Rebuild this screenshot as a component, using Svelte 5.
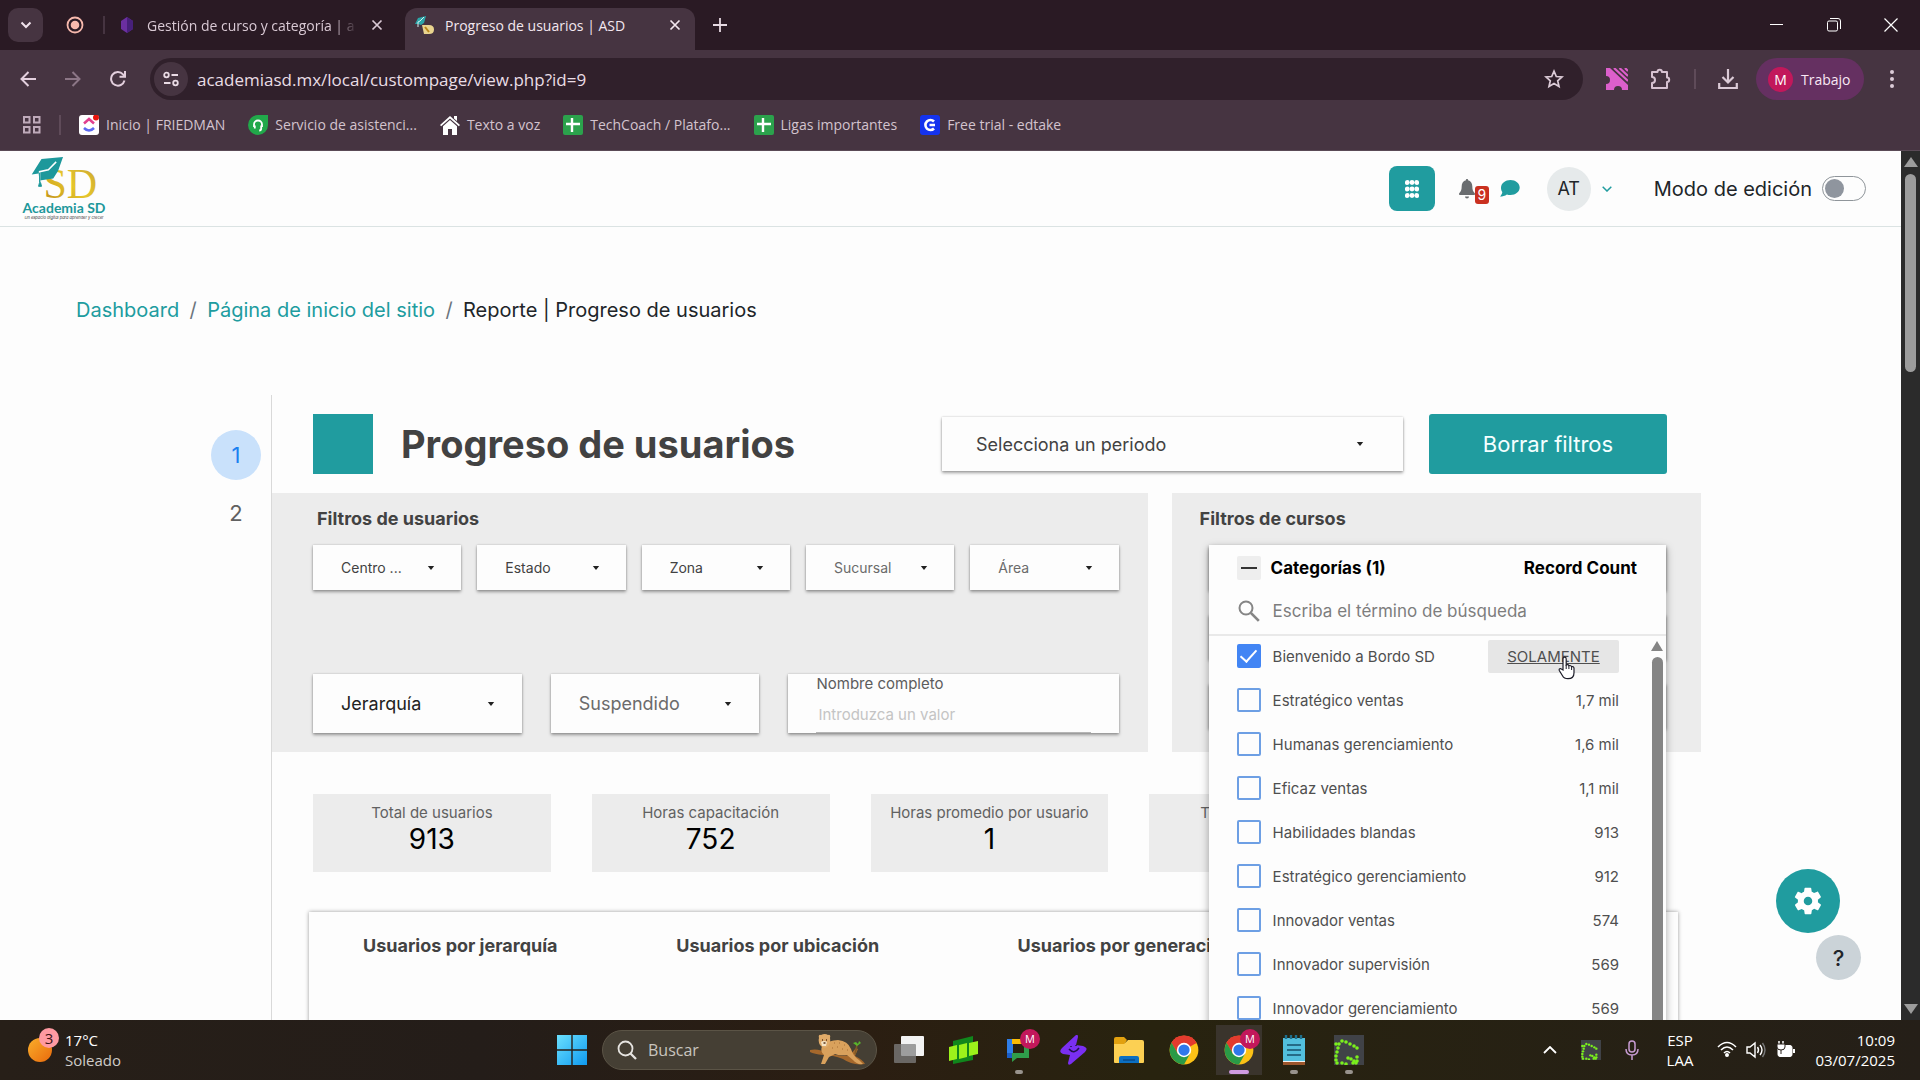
<script lang="ts">
	const userFilters = [
		{ label: "Centro ...", soft: false },
		{ label: "Estado", soft: false },
		{ label: "Zona", soft: false },
		{ label: "Sucursal", soft: true },
		{ label: "Área", soft: true },
	];

	const stats = [
		{ label: "Total de usuarios", value: "913" },
		{ label: "Horas capacitación", value: "752" },
		{ label: "Horas promedio por usuario", value: "1" },
		{ label: "Total de categorías", value: "" },
	];

	let categories = $state([
		{ name: "Bienvenido a Bordo SD", count: "", checked: true },
		{ name: "Estratégico ventas", count: "1,7 mil", checked: false },
		{ name: "Humanas gerenciamiento", count: "1,6 mil", checked: false },
		{ name: "Eficaz ventas", count: "1,1 mil", checked: false },
		{ name: "Habilidades blandas", count: "913", checked: false },
		{ name: "Estratégico gerenciamiento", count: "912", checked: false },
		{ name: "Innovador ventas", count: "574", checked: false },
		{ name: "Innovador supervisión", count: "569", checked: false },
		{ name: "Innovador gerenciamiento", count: "569", checked: false },
	]);
	let selected = $derived(categories.filter((c) => c.checked).length);

	// dots of the green "C" app icon
	const dots = [
		[8, 6], [12, 7], [16, 9], [20, 11], [23, 13], [5, 9], [2, 9], [4, 13], [3, 17], [2, 21],
		[2, 25], [3, 28], [8, 28], [12, 29], [22, 28], [19, 28], [23, 26], [20, 26], [17, 24], [14, 23], [23, 22],
	];
</script>

{#snippet dropdown(label: string, kind: string)}
	<label class="dropdown {kind}">
		<select aria-label={label}>
			<option>{label}</option>
		</select>
		<svg class="caret" viewBox="0 0 8 5" width="8" height="4"><path d="M0 0h8L4 5z" fill="#222" /></svg>
	</label>
{/snippet}

{#snippet cross(size: number)}
	<svg width={size} height={size} viewBox="0 0 12 12"><path d="M1.5 1.5l9 9M10.5 1.5l-9 9" stroke="currentColor" stroke-width="1.7" fill="none" /></svg>
{/snippet}

{#snippet chrome()}
	<svg width="30" height="30" viewBox="0 0 48 48">
		<circle cx="24" cy="24" r="23" fill="#fbc116" />
		<path d="M24 24L4 12.600a23 23 0 0 1 40 0z" fill="#e33b2e" />
		<path d="M24 13h20a23 23 0 0 0-40-.400l10 17z" fill="#e33b2e" />
		<path d="M4.100 12.500A23 23 0 0 0 24 47l9.700-17H14.300z" fill="#2a9a47" />
		<circle cx="24" cy="24" r="11.500" fill="#fff" />
		<circle cx="24" cy="24" r="9" fill="#2f78ea" />
	</svg>
{/snippet}

{#snippet greenDots(size: number)}
	<svg width={size} height={size} viewBox="0 0 30 30">
		<rect width="30" height="30" fill="#404247" />
		{#each dots as [x, y]}
			<circle cx={x} cy={y} r="1.800" fill="#7bf01c" />
		{/each}
	</svg>
{/snippet}

{#snippet sheet()}
	<svg width="20" height="20" viewBox="0 0 20 20">
		<rect width="20" height="20" rx="2" fill="#2ba24c" />
		<path d="M9 3v14M3 9h14" stroke="#fff" stroke-width="2.400" />
	</svg>
{/snippet}

{#snippet cap(w: number, h: number)}
	<svg class="cap" width={w} height={h} viewBox="0 0 66 45">
		<defs>
			<linearGradient id="gold" x1="0" y1="1" x2="1" y2="0">
				<stop offset="0" stop-color="#b98516" /><stop offset=".5" stop-color="#e6c62b" /><stop offset="1" stop-color="#c9a535" />
			</linearGradient>
		</defs>
		<text x="12" y="42" font-family="Liberation Serif, serif" font-size="43" fill="url(#gold)">SD</text>
		<path d="M10 2L32 0 27 14 22 22 8 24 7 17 0 18z" fill="#1d989b" />
		<path d="M25 5l-8 8-9 2v10" fill="none" stroke="#fff" stroke-width="1.500" />
		<path d="M8 16v10l-1 4h3l-1-4" fill="#1d989b" stroke="#1d989b" />
	</svg>
{/snippet}

<div class="screen">
	<header class="browser">
		<div class="tabstrip">
			<button class="tab-search" aria-label="Buscar pestañas">
				<svg width="12" height="8" viewBox="0 0 12 8"><path d="M1.500 1.500L6 6l4.500-4.500" stroke="#f0e2ec" stroke-width="2" fill="none" /></svg>
			</button>
			<div class="pinned">
				<svg width="18" height="18" viewBox="0 0 18 18"><circle cx="9" cy="9" r="7.500" fill="none" stroke="#f7b9ad" stroke-width="1.800" /><circle cx="9" cy="9" r="4.300" fill="#f7b9ad" /></svg>
			</div>
			<div class="tab">
				<svg width="14" height="16" viewBox="0 0 14 16"><path d="M7 0l6 4v8l-6 4-6-4V4z" fill="#6b2fa0" /><path d="M7 0l6 4v8l-6 4z" fill="#47207a" /></svg>
				<span class="tab-title fade">Gestión de curso y categoría | a</span>
				<button class="bare" aria-label="Cerrar">{@render cross(12)}</button>
			</div>
			<div class="tab active">
				<svg width="20" height="18" viewBox="0 0 20 18">
					<path d="M7 9h7q5 0 5 4.500T14 18H9z" fill="#e9d48e" /><path d="M10 11l4 5" stroke="#b98516" stroke-width="2" />
					<path d="M3 2L11 0 9 7 6 9 3 8 0 8z" fill="#2ba5a8" /><path d="M9 1L5 5 3 6v5" fill="none" stroke="#d7f1f1" />
				</svg>
				<span class="tab-title">Progreso de usuarios | ASD</span>
				<button class="bare" aria-label="Cerrar">{@render cross(12)}</button>
			</div>
			<button class="bare new-tab" aria-label="Nueva pestaña">
				<svg width="14" height="14" viewBox="0 0 14 14"><path d="M7 0v14M0 7h14" stroke="currentColor" stroke-width="1.800" /></svg>
			</button>
			<div class="window-buttons">
				<button class="bare" aria-label="Minimizar"><svg width="14" height="14" viewBox="0 0 14 14"><path d="M0 6.500h13" stroke="#fff" /></svg></button>
				<button class="bare" aria-label="Restaurar"><svg width="14" height="14" viewBox="0 0 14 14" fill="none" stroke="#fff"><rect x=".5" y="3" width="10" height="10" rx="1.500" /><path d="M3 .500h8a2.500 2.500 0 0 1 2.500 2.500v8" /></svg></button>
				<button class="bare" aria-label="Cerrar ventana"><svg width="14" height="14" viewBox="0 0 14 14"><path d="M.5.500l13 13M13.500.500l-13 13" stroke="#fff" stroke-width="1.200" /></svg></button>
			</div>
		</div>

		<div class="toolbar">
			<div class="nav">
				<button class="bare" aria-label="Atrás"><svg width="16" height="16" viewBox="0 0 16 16" fill="none" stroke="#e3cfdd" stroke-width="2"><path d="M16 8H2M8.500 1L1.500 8l7 7" /></svg></button>
				<button class="bare" aria-label="Adelante"><svg width="16" height="16" viewBox="0 0 16 16" fill="none" stroke="#8c7686" stroke-width="2"><path d="M0 8h14M7.500 1l7 7-7 7" /></svg></button>
				<button class="bare" aria-label="Recargar"><svg width="16" height="16" viewBox="0 0 16 16" fill="none" stroke="#e3cfdd" stroke-width="2"><path d="M14.500 9.500A6.800 6.800 0 1 1 13 3.300L15 5.500M15 0v5.800H9.500" /></svg></button>
			</div>
			<div class="omnibox">
				<button class="site-info" aria-label="Información del sitio">
					<svg width="16" height="16" viewBox="0 0 16 16" fill="none" stroke="#eadbe5" stroke-width="1.800"><circle cx="3.500" cy="4" r="2.300" /><path d="M8.500 4H15M1 12h6.500" /><circle cx="12.500" cy="12" r="2.300" /></svg>
				</button>
				<input aria-label="Dirección" value="academiasd.mx/local/custompage/view.php?id=9" />
				<button class="bare" aria-label="Favorito"><svg width="20" height="20" viewBox="0 0 20 20" fill="none" stroke="#dccbd7" stroke-width="1.700"><path d="M10 2.200l2.300 5.300 5.700.500-4.300 3.800 1.300 5.600-5-3-5 3 1.300-5.600L2 8l5.700-.500z" /></svg></button>
			</div>
			<div class="extensions">
				<svg width="22" height="22" viewBox="0 0 22 22"><path d="M0 0h4l18 17v5h-6a4 4 0 0 0-8 0H0v-6a4 4 0 0 0 0-8z" fill="#dc5fcb" /><path d="M8 0l14 13M13.500 0L22 8M19 0l3 3" stroke="#dc5fcb" stroke-width="2.200" /></svg>
				<svg width="22" height="22" viewBox="0 0 22 22" fill="none" stroke="#d7c2d1" stroke-width="2"><path d="M2 4h5.500a2.200 2.200 0 0 1 4.400 0H17v5.500a2.200 2.200 0 0 1 0 4.400V20H2v-5a3 3 0 0 0 0-6z" stroke-linejoin="round" /></svg>
				<span class="bar"></span>
				<svg width="20" height="20" viewBox="0 0 20 20" fill="none" stroke="#dccbd7" stroke-width="2.200"><path d="M10 0v13M4.500 8l5.500 5.500L15.500 8M1.200 14v5h17.600v-5" /></svg>
			</div>
			<button class="profile"><span class="initial">M</span>Trabajo</button>
			<button class="bare more" aria-label="Más"><svg width="4" height="18" viewBox="0 0 4 18" fill="#dccbd7"><circle cx="2" cy="2" r="2" /><circle cx="2" cy="9" r="2" /><circle cx="2" cy="16" r="2" /></svg></button>
		</div>

		<nav class="bookmarks">
			<svg width="18" height="18" viewBox="0 0 18 18" fill="none" stroke="#bfaaba" stroke-width="2"><rect x="1" y="1" width="5.500" height="5.500" /><rect x="11" y="1" width="5.500" height="5.500" /><rect x="1" y="11" width="5.500" height="5.500" /><rect x="11" y="11" width="5.500" height="5.500" /></svg>
			<span class="bar"></span>
			<a href="#inicio">
				<svg width="20" height="20" viewBox="0 0 20 20"><rect width="20" height="20" rx="3" fill="#fff" /><path d="M5 8.500l5-4.500 5 4.500" fill="none" stroke="#e0408f" stroke-width="2.500" /><path d="M5 13q5 5 10 0" fill="none" stroke="#5b68f0" stroke-width="2.500" /><circle cx="17" cy="2.500" r="3" fill="#e8150e" /></svg>
				Inicio | FRIEDMAN
			</a>
			<a href="#servicio">
				<svg width="20" height="20" viewBox="0 0 20 20"><path d="M10 0h10v10a10 10 0 1 1-10-10z" fill="#21a84a" /><path d="M6 12V9.500a4 4 0 0 1 8 0V12M6.800 10.500v3M13.200 10.500v3q0 2-2 2" fill="none" stroke="#fff" stroke-width="1.800" /></svg>
				Servicio de asistenci...
			</a>
			<a href="#voz">
				<svg width="20" height="20" viewBox="0 0 20 20" fill="#fff"><path d="M10 1l10 9-1.200 1.300L10 3.500l-8.800 7.800L0 10zM14 1h3v5l-3-2.500zM10 5l7 6.200V20h-5v-6H8v6H3v-8.800z" /></svg>
				Texto a voz
			</a>
			<a href="#tech">{@render sheet()}TechCoach / Platafo...</a>
			<a href="#ligas">{@render sheet()}Ligas importantes</a>
			<a href="#edtake">
				<svg width="20" height="20" viewBox="0 0 20 20"><rect width="20" height="20" rx="3" fill="#1433ee" /><path d="M14 6.500a5 5 0 1 0 0 7M9.500 10H15" fill="none" stroke="#fff" stroke-width="2.600" /></svg>
				Free trial - edtake
			</a>
		</nav>
	</header>

	<div class="viewport">
		<div class="page">
			<div class="site-nav">
				<a class="brand" href="#home">
					{@render cap(66, 44)}
					<strong>Academia SD</strong>
					<small>Un espacio digital para aprender y crecer</small>
				</a>
				<div class="site-actions">
					<button class="apps" aria-label="Aplicaciones">
						<svg width="14" height="18" viewBox="0 0 14 18" fill="#fff">
							{#each [2.5, 9, 15.5] as y}
								{#each [2.3, 7, 11.7] as x}
									<circle cx={x} cy={y} r="2.400" />
								{/each}
							{/each}
						</svg>
					</button>
					<button class="bare bell" aria-label="Notificaciones">
						<svg width="18" height="20" viewBox="0 0 16 20" fill="#6a6d70"><path d="M8 0a1 1 0 0 1 1 1.300c3 .700 4.300 3 4.300 6 0 4 1 5.500 2.500 7 .400.700 0 1.700-.800 1.700H1c-.800 0-1.200-1-.800-1.700C1.700 12.800 2.700 11.300 2.700 7.300c0-3 1.300-5.300 4.300-6A1 1 0 0 1 8 0zM6 17.500h4a2 2 0 0 1-4 0z" /></svg>
						<span class="badge">9</span>
					</button>
					<button class="bare chat" aria-label="Mensajes"><svg width="20" height="17" viewBox="0 0 20 17"><path d="M10.500 0c5 0 9.200 3.200 9.200 7.500S15.500 15 10.500 15c-1.300 0-2.500-.200-3.600-.600C5 15.800 2.500 16.500 0 16.500c1.300-1.200 2.200-3 2.300-4.500C1.200 10.800 1 9 1 7.500 1 3.200 5.500 0 10.500 0z" fill="#209c9f" /></svg></button>
					<button class="user">
						<span class="avatar">AT</span>
						<svg width="10" height="6" viewBox="0 0 10 6"><path d="M.700.700L5 5 9.300.700" fill="none" stroke="#209c9f" stroke-width="1.500" /></svg>
					</button>
					<label class="edit-mode">Modo de edición <input type="checkbox" class="switch" /></label>
				</div>
			</div>

			<nav class="breadcrumb">
				<a href="#dashboard">Dashboard</a><span class="slash">/</span><a href="#inicio-sitio">Página de inicio del sitio</a><span class="slash">/</span><span>Reporte | Progreso de usuarios</span>
			</nav>

			<main class="report">
				<div class="pager">
					<button class="page-no current">1</button>
					<button class="page-no">2</button>
				</div>

				<div class="canvas">
					<div class="heading">
						<span class="swatch"></span>
						<h1>Progreso de usuarios</h1>
						{@render dropdown("Selecciona un periodo", "period")}
						<button class="clear">Borrar filtros</button>
					</div>

					<div class="filters">
						<section class="panel">
							<h2>Filtros de usuarios</h2>
							<div class="row five">
								{#each userFilters as f}
									{@render dropdown(f.label, f.soft ? "soft" : "")}
								{/each}
							</div>
							<div class="row three">
								{@render dropdown("Jerarquía", "tall dark")}
								{@render dropdown("Suspendido", "tall soft")}
								<label class="name-box">
									Nombre completo
									<input placeholder="Introduzca un valor" />
								</label>
							</div>
						</section>

						<section class="panel courses">
							<h2>Filtros de cursos</h2>
							<div class="slots"><div></div><div></div><div></div></div>

							<div class="popup">
								<div class="popup-head">
									<button class="collapse" aria-label="Deseleccionar todo"></button>
									<strong>Categorías ({selected})</strong>
									<strong class="count-head">Record Count</strong>
								</div>
								<div class="popup-search">
									<svg width="22" height="22" viewBox="0 0 22 22" fill="none" stroke="#858585" stroke-width="2"><circle cx="8" cy="8" r="6.500" /><path d="M12.800 12.800l8 8" stroke-width="2.600" /></svg>
									<input placeholder="Escriba el término de búsqueda" aria-label="Buscar categoría" />
								</div>
								<div class="popup-body">
									<ul>
										{#each categories as c, i}
											<li>
												<label><input type="checkbox" bind:checked={c.checked} />{c.name}</label>
												{#if i === 0}
													<button class="only">SOLAMENTE</button>
												{:else}
													<span>{c.count}</span>
												{/if}
											</li>
										{/each}
									</ul>
									<div class="popup-scroll">
										<svg width="12" height="10" viewBox="0 0 12 10"><path d="M6 0l6 10H0z" fill="#858585" /></svg>
										<div class="thumb"></div>
									</div>
								</div>
								<svg class="pointer" width="18" height="24" viewBox="0 0 18 24"><path d="M5 14V3q0-1.800 1.600-1.800T8.200 3v6q2-1 2.700.700 2-.700 2.700 1 2-.500 2.400 1.500v4.500q0 6-6 6-4 0-5.500-3L1.300 14.500q-.600-2 1.200-2z" fill="#fff" stroke="#1c1c28" stroke-width="1.200" /><path d="M8.200 9v4M10.900 10v3M13.600 11v3" stroke="#1c1c28" /></svg>
							</div>
						</section>
					</div>

					<div class="stats">
						{#each stats as s}
							<div class="stat">
								<span>{s.label}</span>
								<b>{s.value}</b>
							</div>
						{/each}
					</div>

					<div class="charts">
						<h3>Usuarios por jerarquía</h3>
						<h3>Usuarios por ubicación</h3>
						<h3>Usuarios por generación</h3>
					</div>
				</div>
			</main>

			<button class="fab settings" aria-label="Ajustes">
				<svg width="32" height="32" viewBox="0 0 24 24"><path fill="#fff" d="M19.400 13c0-.300.100-.700.100-1s0-.700-.100-1l2.100-1.700c.200-.200.200-.400.100-.600l-2-3.500c-.100-.200-.400-.300-.600-.200l-2.500 1c-.500-.400-1.100-.700-1.700-1l-.400-2.600c0-.200-.200-.400-.500-.400h-4c-.200 0-.500.200-.500.400l-.400 2.700c-.600.200-1.200.600-1.700 1l-2.500-1c-.200-.100-.500 0-.600.200l-2 3.500c-.100.200-.1.500.1.600L4.500 11c0 .300-.1.700-.1 1s0 .700.1 1l-2.100 1.700c-.200.200-.2.400-.1.600l2 3.500c.1.200.4.300.6.200l2.500-1c.5.400 1.100.700 1.700 1l.4 2.600c0 .2.2.4.500.4h4c.2 0 .5-.2.500-.4l.4-2.700c.6-.2 1.200-.6 1.700-1l2.500 1c.2.100.5 0 .6-.2l2-3.500c.1-.2.1-.5-.1-.600zM12 15.200a3.200 3.200 0 1 1 0-6.400 3.200 3.200 0 0 1 0 6.400z" /></svg>
			</button>
			<button class="fab help">?</button>
		</div>

		<div class="scrollbar">
			<svg width="14" height="10" viewBox="0 0 14 10"><path d="M7 0l7 10H0z" fill="#9c9c9c" /></svg>
			<div class="thumb"></div>
			<svg width="14" height="10" viewBox="0 0 14 10"><path d="M7 10l7-10H0z" fill="#9c9c9c" /></svg>
		</div>
	</div>

	<footer class="taskbar">
		<div class="weather">
			<div class="sun"><span>3</span></div>
			<div>17°C<br /><em>Soleado</em></div>
		</div>
		<div class="apps-row">
			<svg class="start" width="30" height="30" viewBox="0 0 30 30">
				<defs><linearGradient id="win" x1="0" y1="0" x2="1" y2="1"><stop offset="0" stop-color="#6be0fd" /><stop offset="1" stop-color="#0f9af0" /></linearGradient></defs>
				<path d="M0 0h14.300v14.300H0zM15.700 0H30v14.300H15.700zM0 15.700h14.300V30H0zM15.700 15.700H30V30H15.700z" fill="url(#win)" />
			</svg>
			<label class="task-search">
				<svg width="20" height="20" viewBox="0 0 20 20" fill="none" stroke="#e6e4e0" stroke-width="1.800"><circle cx="8.500" cy="8.500" r="7" /><path d="M13.500 13.500l5.500 5.500" stroke-width="2.300" /></svg>
				<input placeholder="Buscar" />
				<svg width="56" height="32" viewBox="0 0 56 32">
					<path d="M0 16q8-2 18 3 12 4 22 2l6-7 2 1-3 7q8 4 10 8-12 2-22-5-10-4-20-4Q4 20 0 18z" fill="#a5682c" />
					<path d="M12 12q7-6 16-6 10 1 13 9 2 7 8 11l4 4q-6 1-10-4l-6-5q-8 1-12-1l-6 3-4 7h-4l3-9q-4-3-2-9z" fill="#d9a15c" />
					<path d="M9 4q-1-4 2-3 4-2 7 0 3-1 2 3 1 6-3 9-4 2-7-2-2-3-1-7z" fill="#e0ab69" />
					<path d="M11 8q3-2 6 0l-1 4h-4z" fill="#f4e3c5" />
					<path d="M12 6h1M16 6h1M13.500 9h2" stroke="#59351a" stroke-width="1.500" />
					<path d="M24 9h1M29 9h1M34 11h1M27 13h1M32 15h1M37 16h1M22 14h1" stroke="#a86f35" stroke-width="1.200" />
					<path d="M45 20l2-9" stroke="#7e5a24" stroke-width="1.500" /><path d="M47 12l-4-3 3-1 2 2 1-3 2 2z" fill="#59b52c" />
				</svg>
			</label>
			<div class="app"><svg width="30" height="30" viewBox="0 0 30 30"><rect x="7" y="1" width="23" height="20" rx="1" fill="#f3f3f3" /><rect x="0" y="9" width="22" height="19" rx="1" fill="#808080" fill-opacity=".75" /></svg></div>
			<div class="app"><svg width="30" height="30" viewBox="0 0 30 30"><path d="M4 6L24 1v24L4 29z" fill="#10861c" /><path d="M0 12l8-2v14l-8 2zM10 10l8-2v14l-8 2zM20 8l9-2v13l-9 2z" fill="#9cf21b" /></svg></div>
			<div class="app">
				<svg width="30" height="30" viewBox="0 0 30 30"><path d="M3 4h6v15H3z" fill="#2f7ee8" /><path d="M8 4h12v5H8z" fill="#fbbc05" /><path d="M3 18h5v5H3z" fill="#1a5ec7" /><path d="M8 18h12V9h5v14H13l-5 4z" fill="#2f9d4b" /></svg>
				<span class="mbadge">M</span><i></i>
			</div>
			<div class="app"><svg width="30" height="30" viewBox="0 0 30 30"><path d="M17 0q2-1 2 2l-2 8 7 1q6 2 2 6L12 29q-3 2-3-1l2-8-7-1q-5-2-1-6z" fill="#7a2ff2" /><path d="M10 14q5 6 10-1M12 11v1M17 10v1" fill="none" stroke="#22114a" stroke-width="1.500" /></svg></div>
			<div class="app"><svg width="30" height="30" viewBox="0 0 30 30"><path d="M0 4q0-2 2-2h8l3 3-3 5H0z" fill="#e2a10f" /><path d="M0 9h10l4-4h14q2 0 2 2v20q0 1-1 1H1q-1 0-1-1z" fill="#fcd053" /><path d="M5 28v-5q0-2 2-2h16q2 0 2 2v5z" fill="#0b6fc2" /><path d="M9 25h12" stroke="#0a4a8a" stroke-width="1.500" /></svg></div>
			<div class="app">{@render chrome()}</div>
			<div class="app open">{@render chrome()}<span class="mbadge">M</span><i class="wide"></i></div>
			<div class="app"><svg width="30" height="30" viewBox="0 0 30 30"><path d="M4 25h22v5H4z" fill="#9c562c" /><path d="M4 25h22v2H4z" fill="#f2f2f2" /><path d="M4 3h22v23H4z" fill="#52bfdd" /><path d="M8 10h14M8 15h14M8 20h14" stroke="#17506b" stroke-width="1.600" /><path d="M7 0v4M12 0v4M17 0v4M22 0v4" stroke="#1e6f8c" stroke-width="2.400" /></svg><i></i></div>
			<div class="app">{@render greenDots(30)}<i></i></div>
		</div>
		<div class="tray">
			<svg width="14" height="8" viewBox="0 0 14 8"><path d="M1 7l6-6 6 6" fill="none" stroke="#fff" stroke-width="1.800" /></svg>
			{@render greenDots(20)}
			<svg width="14" height="20" viewBox="0 0 14 20" fill="none" stroke="#c79bd2" stroke-width="1.500"><rect x="4" y="1" width="6" height="11" rx="3" /><path d="M1 9q0 6 6 6t6-6M7 15v5" /></svg>
			<div class="lang">ESP<br />LAA</div>
			<div class="status">
				<svg width="20" height="16" viewBox="0 0 20 16" fill="none" stroke="#fff" stroke-width="1.600"><path d="M1 6q9-9 18 0M4 9q6-6 12 0M7 12q3-3 6 0" /><circle cx="10" cy="14" r="1.200" fill="#fff" /></svg>
				<svg width="20" height="18" viewBox="0 0 20 18" fill="none" stroke="#fff" stroke-width="1.400"><path d="M1 6h3l5-4v14l-5-4H1zM11.500 6q2 3 0 6M14 4q4 5 0 10" /><path d="M16.500 2q5 7 0 14" stroke="#777" /></svg>
				<svg width="20" height="18" viewBox="0 0 20 18"><rect x="3" y="4.500" width="14" height="11" rx="2" fill="#fff" stroke="#fff" /><path d="M18 8h2v4h-2z" fill="#fff" /><path d="M4 0v3M8 0v3" stroke="#fff" stroke-width="1.500" /><path d="M2 3h8v3q0 3-4 3t-4-3zM6 9v4" fill="#fff" stroke="#28211b" stroke-width="1" /></svg>
			</div>
			<div class="clock">10:09<br />03/07/2025</div>
		</div>
	</footer>
</div>

<style>
	:global(body) {
		margin: 0;
	}
	.screen {
		display: flex;
		flex-direction: column;
		height: 100vh;
		overflow: hidden;
		background: #fdfdfd;
		font-family: "Inter", sans-serif;
		color: #212529;
	}
	.screen * {
		box-sizing: border-box;
	}
	button,
	input,
	select {
		font: inherit;
		color: inherit;
	}
	svg {
		display: block;
		flex: none;
	}
	.bare {
		display: flex;
		align-items: center;
		background: none;
		border: 0;
		padding: 0;
	}

	/* browser chrome */
	.browser {
		flex: none;
		background: #463441;
		color: #e6d9e2;
		font-family: "Open Sans", sans-serif;
		font-size: 14px;
		border-bottom: 1px solid #5a4a56;
	}
	.tabstrip {
		display: flex;
		align-items: center;
		height: 50px;
		padding-left: 8px;
		background: #2a1a24;
	}
	.tab-search {
		display: grid;
		place-items: center;
		width: 35px;
		height: 34px;
		border: 0;
		border-radius: 10px;
		background: #463441;
	}
	.pinned {
		display: flex;
		justify-content: flex-end;
		width: 62px;
		padding-right: 19px;
		border-right: 2px solid #463441;
	}
	.tab {
		display: flex;
		align-items: center;
		width: 300px;
		gap: 13px;
		padding: 0 22px 0 15px;
		color: #d9c9d4;
	}
	.tab.active {
		width: 290px;
		height: 42px;
		align-self: flex-end;
		gap: 10px;
		padding: 0 14px 8px 10px;
		border-radius: 12px 12px 0 0;
		background: #463441;
		color: #f3e7ef;
	}
	.tab-title {
		flex: 1;
		white-space: nowrap;
		overflow: hidden;
	}
	.fade {
		mask-image: linear-gradient(to right, #000 88%, transparent);
	}
	.new-tab {
		margin-left: 18px;
	}
	.window-buttons {
		display: flex;
		gap: 43px;
		margin-left: auto;
		padding-right: 22px;
	}
	.toolbar {
		display: flex;
		align-items: center;
		height: 58px;
	}
	.nav {
		display: flex;
		gap: 29px;
		width: 150px;
		padding-left: 20px;
	}
	.omnibox {
		display: flex;
		flex: 1;
		align-items: center;
		height: 42px;
		gap: 7px;
		padding: 0 19px 0 4px;
		border-radius: 21px;
		background: #30202b;
	}
	.omnibox input {
		flex: 1;
		border: 0;
		background: none;
		font-size: 17px;
		color: #e9dde5;
	}
	.site-info {
		display: grid;
		place-items: center;
		width: 34px;
		height: 34px;
		border: 0;
		border-radius: 50%;
		background: #463441;
	}
	.extensions {
		display: flex;
		align-items: center;
		gap: 22px;
		padding: 0 18px 0 23px;
	}
	.bar {
		width: 2px;
		height: 20px;
		background: #5f4b59;
	}
	.profile {
		display: flex;
		align-items: center;
		gap: 8px;
		height: 42px;
		width: 108px;
		padding: 0 12px;
		border: 0;
		border-radius: 21px;
		background: #653061;
		color: #f9e8f5;
	}
	.initial {
		display: grid;
		place-items: center;
		flex: none;
		width: 25px;
		height: 25px;
		border-radius: 50%;
		background: #c2185b;
		color: #fff;
	}
	.more {
		margin: 0 26px;
	}
	.bookmarks {
		display: flex;
		align-items: center;
		height: 42px;
		padding: 0 0 9px 23px;
	}
	.bookmarks .bar {
		margin: 0 18px;
	}
	.bookmarks a {
		display: flex;
		align-items: center;
		gap: 7px;
		margin-right: 23px;
		color: #d3c3ce;
		text-decoration: none;
		white-space: nowrap;
	}

	/* site */
	.viewport {
		display: flex;
		flex: 1;
		min-height: 0;
	}
	.page {
		position: relative;
		flex: 1;
		min-width: 0;
		overflow: hidden;
	}
	.scrollbar {
		display: flex;
		flex-direction: column;
		align-items: center;
		width: 19px;
		padding: 6px 0;
		background: #2b2b2b;
	}
	.scrollbar .thumb {
		width: 11px;
		height: 198px;
		margin: 7px 0 auto;
		border-radius: 6px;
		background: #9c9c9c;
	}
	.site-nav {
		display: flex;
		justify-content: space-between;
		align-items: center;
		height: 76px;
		padding: 0 35px 0 23px;
		border-bottom: 1px solid #dbe3e3;
	}
	.brand {
		display: flex;
		flex-direction: column;
		align-items: center;
		width: 82px;
		color: #1d989b;
		text-decoration: none;
	}
	.cap {
		overflow: visible;
	}
	.brand strong {
		font: bold 14px/14px "Lato", sans-serif;
		white-space: nowrap;
	}
	.brand small {
		font-size: 4px;
		line-height: 5px;
		font-style: italic;
		color: #333;
		white-space: nowrap;
	}
	.site-actions {
		display: flex;
		align-items: center;
		font-size: 20px;
	}
	.apps {
		display: grid;
		place-items: center;
		width: 46px;
		height: 45px;
		border: 0;
		border-radius: 8px;
		background: #209c9f;
	}
	.bell {
		position: relative;
		margin-left: 23px;
	}
	.badge {
		position: absolute;
		left: 17px;
		top: 7px;
		width: 14px;
		border-radius: 3px;
		background: #ca3120;
		color: #fff;
		font-size: 14px;
		line-height: 18px;
		text-align: center;
	}
	.chat {
		margin-left: 24px;
	}
	.user {
		display: flex;
		align-items: center;
		gap: 11px;
		margin-left: 27px;
		padding: 0;
		border: 0;
		background: none;
	}
	.avatar {
		display: grid;
		place-items: center;
		width: 44px;
		height: 44px;
		border-radius: 50%;
		background: #e6eaeb;
		font-size: 18px;
	}
	.edit-mode {
		display: flex;
		align-items: center;
		gap: 10px;
		margin-left: 42px;
	}
	.switch {
		appearance: none;
		width: 44px;
		height: 25px;
		margin: 0;
		padding: 2px;
		border: 1px solid #8f959a;
		border-radius: 13px;
	}
	.switch::before {
		content: "";
		display: block;
		width: 19px;
		height: 19px;
		border-radius: 50%;
		background: #8f959e;
	}
	.breadcrumb {
		display: flex;
		align-items: center;
		padding: 69px 76px 0;
		font-size: 20px;
		line-height: 28px;
	}
	.breadcrumb a {
		color: #209c9f;
		text-decoration: none;
	}
	.slash {
		width: 28px;
		text-align: center;
		color: #6c757d;
	}

	/* report */
	.report {
		display: flex;
		margin: 71px 200px 0 211px;
	}
	.pager {
		display: flex;
		flex-direction: column;
		gap: 8px;
		width: 60px;
		padding-top: 35px;
	}
	.page-no {
		width: 50px;
		height: 50px;
		border: 0;
		border-radius: 50%;
		background: none;
		color: #616161;
		font-size: 22px;
	}
	.page-no.current {
		background: #c9e1fb;
		color: #1a80f0;
	}
	.canvas {
		flex: 1;
		min-width: 0;
		min-height: 700px;
		border-left: 1px solid #d9d9d9;
	}
	.heading {
		display: flex;
		align-items: center;
		padding: 19px 34px 19px 41px;
	}
	.swatch {
		width: 60px;
		height: 60px;
		background: #209c9f;
	}
	h1 {
		flex: 1;
		margin: 0 0 0 28px;
		font-size: 38px;
		line-height: 46px;
		color: #424242;
		white-space: nowrap;
	}
	.clear {
		width: 238px;
		height: 60px;
		margin-left: 26px;
		border: 0;
		border-radius: 3px;
		background: #209c9f;
		color: #f4ffff;
		font-size: 22px;
	}
	.dropdown {
		display: flex;
		align-items: center;
		height: 45px;
		padding: 0 26px 0 28px;
		background: #fdfdfd;
		box-shadow: 0 2px 3px rgba(0, 0, 0, 0.35), 0 0 2px rgba(0, 0, 0, 0.2);
		font-size: 14px;
		color: #424242;
	}
	.dropdown select {
		flex: 1;
		min-width: 0;
		appearance: none;
		border: 0;
		padding: 0;
		background: none;
	}
	.period {
		width: 461px;
		height: 54px;
		padding: 0 39px 0 34px;
		font-size: 18px;
	}
	.tall {
		height: 59px;
		padding: 0 27px 0 28px;
		font-size: 18px;
	}
	.soft {
		color: #6b6b6b;
	}
	.dark {
		color: #222;
	}
	.filters {
		display: grid;
		grid-template-columns: 875fr 529fr;
		gap: 24px;
	}
	.panel {
		position: relative;
		height: 259px;
		padding: 14px 29px 0 41px;
		background: #ececec;
	}
	.panel.courses {
		padding: 14px 35px 0 37px;
	}
	h2 {
		margin: 0 0 14px 4px;
		font-size: 18px;
		line-height: 24px;
		color: #424242;
	}
	.courses h2 {
		margin-left: -9px;
	}
	.row {
		display: grid;
	}
	.five {
		grid-template-columns: repeat(5, 1fr);
		gap: 16px;
	}
	.three {
		grid-template-columns: 208fr 208fr 329fr;
		gap: 29px;
		margin-top: 84px;
	}
	.name-box {
		display: flex;
		flex-direction: column;
		height: 59px;
		padding: 0 28px;
		background: #fdfdfd;
		box-shadow: 0 2px 3px rgba(0, 0, 0, 0.35), 0 0 2px rgba(0, 0, 0, 0.2);
		font-size: 15px;
		line-height: 20px;
		color: #5c5c5c;
	}
	.name-box input {
		flex: 1;
		min-width: 0;
		padding: 3px 2px 0;
		border: 0;
		border-bottom: 1px solid #b5b5b5;
		background: none;
		font-size: 15px;
	}
	.name-box input::placeholder {
		color: #c4c4c4;
	}
	.slots {
		display: grid;
		gap: 24px;
	}
	.slots div {
		height: 45px;
		background: #fdfdfd;
		box-shadow: 0 2px 3px rgba(0, 0, 0, 0.5);
	}
	.popup {
		position: absolute;
		z-index: 1;
		top: 52px;
		left: 37px;
		right: 35px;
		background: #fdfdfd;
		box-shadow: 0 3px 8px rgba(0, 0, 0, 0.35);
	}
	.popup-head {
		display: flex;
		align-items: center;
		gap: 10px;
		height: 46px;
		padding: 0 29px 0 28px;
		font-size: 17px;
		color: #000;
	}
	.collapse {
		width: 24px;
		height: 24px;
		padding: 0 4px;
		border: 0;
		border-radius: 2px;
		background: #eee;
	}
	.collapse::before {
		content: "";
		display: block;
		height: 2px;
		background: #333;
	}
	.count-head {
		margin-left: auto;
	}
	.popup-search {
		display: flex;
		align-items: center;
		gap: 13px;
		height: 45px;
		padding: 0 29px 3px;
		border-bottom: 2px solid #e9e9e9;
	}
	.popup-search input {
		flex: 1;
		border: 0;
		padding: 0;
		background: none;
		font-size: 17px;
	}
	.popup-search input::placeholder {
		color: #7d7d7d;
	}
	.popup-body {
		display: flex;
		height: 560px;
	}
	ul {
		flex: 1;
		margin: -2px 0 0;
		padding: 0 29px 0 28px;
		list-style: none;
		font-size: 15px;
		color: #4f4f4f;
	}
	li {
		display: flex;
		justify-content: space-between;
		align-items: center;
		height: 44px;
	}
	li label {
		display: flex;
		align-items: center;
		gap: 12px;
	}
	li input {
		appearance: none;
		width: 24px;
		height: 24px;
		margin: 0;
		border: 2px solid #6d9fe4;
		border-radius: 2px;
	}
	li input:checked {
		border-color: #4285f4;
		background: #4285f4;
	}
	li input:checked::before {
		content: "";
		display: block;
		width: 7px;
		height: 14px;
		margin: 0 auto;
		border: solid #fff;
		border-width: 0 2px 2px 0;
		transform: rotate(42deg);
	}
	.only {
		width: 131px;
		height: 33px;
		border: 0;
		border-radius: 2px;
		background: #e6e6e6;
		text-decoration: underline;
	}
	.popup-scroll {
		display: flex;
		flex-direction: column;
		align-items: center;
		width: 18px;
		padding-top: 5px;
	}
	.popup-scroll .thumb {
		flex: 1;
		width: 11px;
		margin-top: 6px;
		border-radius: 6px;
		background: #858585;
	}
	.pointer {
		position: absolute;
		top: 111px;
		right: 90px;
	}
	.stats {
		display: grid;
		grid-template-columns: repeat(4, 1fr);
		gap: 41px;
		padding: 42px 314px 0 41px;
	}
	.stat {
		display: flex;
		flex-direction: column;
		align-items: center;
		height: 78px;
		padding-top: 8px;
		background: #ececec;
		font-size: 15px;
		line-height: 22px;
		color: #616161;
		white-space: nowrap;
	}
	.stat b {
		font-size: 28px;
		line-height: 30px;
		font-weight: 400;
		color: #000;
	}
	.charts {
		display: grid;
		grid-template-columns: 313fr 341fr 660fr;
		height: 300px;
		margin: 40px 23px 0 37px;
		padding: 22px 0 0 54px;
		box-shadow: 0 0 4px rgba(0, 0, 0, 0.4);
	}
	h3 {
		margin: 0;
		font-size: 18px;
		line-height: 24px;
		color: #424242;
		white-space: nowrap;
	}
	.fab {
		position: absolute;
		display: grid;
		place-items: center;
		padding: 0;
		border: 0;
		border-radius: 50%;
	}
	.settings {
		right: 61px;
		bottom: 87px;
		width: 64px;
		height: 64px;
		background: #209c9f;
	}
	.help {
		right: 40px;
		bottom: 40px;
		width: 45px;
		height: 45px;
		background: #cbd3d8;
		font-size: 22px;
		font-weight: 500;
	}

	/* taskbar */
	.taskbar {
		flex: none;
		display: grid;
		grid-template-columns: 1fr auto 1fr;
		align-items: center;
		height: 60px;
		background: linear-gradient(to right, #271f18, #241d19 25%, #2b1e12 45%, #28230f 60%, #251f18);
		color: #fff;
		font-family: "Open Sans", sans-serif;
		font-size: 15px;
		line-height: 20px;
	}
	.weather {
		display: flex;
		align-items: center;
		gap: 13px;
		padding-left: 28px;
	}
	.weather em {
		font-style: normal;
		color: #cfccc8;
	}
	.sun {
		position: relative;
		width: 24px;
		height: 24px;
		border-radius: 50%;
		background: linear-gradient(135deg, #f9ae2b, #e96a0c);
	}
	.sun span {
		position: absolute;
		left: 11px;
		top: -10px;
		width: 20px;
		border-radius: 50%;
		background: #ff9aa2;
		color: #3b1216;
		text-align: center;
	}
	.apps-row {
		display: flex;
		align-items: center;
	}
	.start {
		margin: 0 15px 0 13px;
	}
	.task-search {
		display: flex;
		align-items: center;
		gap: 11px;
		width: 275px;
		height: 40px;
		margin-right: 4px;
		padding: 0 10px 0 14px;
		border: 1px solid #5b5446;
		border-radius: 20px;
		background: #453f34;
		font-size: 16px;
	}
	.task-search input {
		flex: 1;
		min-width: 0;
		padding: 0;
		border: 0;
		background: none;
	}
	.task-search input::placeholder {
		color: #c9c5bf;
	}
	.app {
		position: relative;
		display: grid;
		place-items: center;
		width: 55px;
		height: 60px;
	}
	.app i {
		position: absolute;
		left: 24px;
		bottom: 6px;
		width: 8px;
		height: 4px;
		border-radius: 2px;
		background: #98938d;
	}
	.app i.wide {
		left: 18px;
		width: 20px;
		background: #cf9ae0;
	}
	.open {
		background: linear-gradient(#3a342c, #3a342c) center / 46px 50px no-repeat;
	}
	.mbadge {
		position: absolute;
		left: 29px;
		top: 9px;
		width: 20px;
		border-radius: 50%;
		background: #c2185b;
		font-size: 11px;
		text-align: center;
	}
	.tray {
		display: flex;
		align-items: center;
		justify-content: flex-end;
		padding-right: 25px;
		gap: 24px;
		text-align: right;
	}
	.lang {
		margin-left: 4px;
		text-align: center;
	}
	.status {
		display: flex;
		gap: 9px;
		margin-right: -4px;
	}
</style>
